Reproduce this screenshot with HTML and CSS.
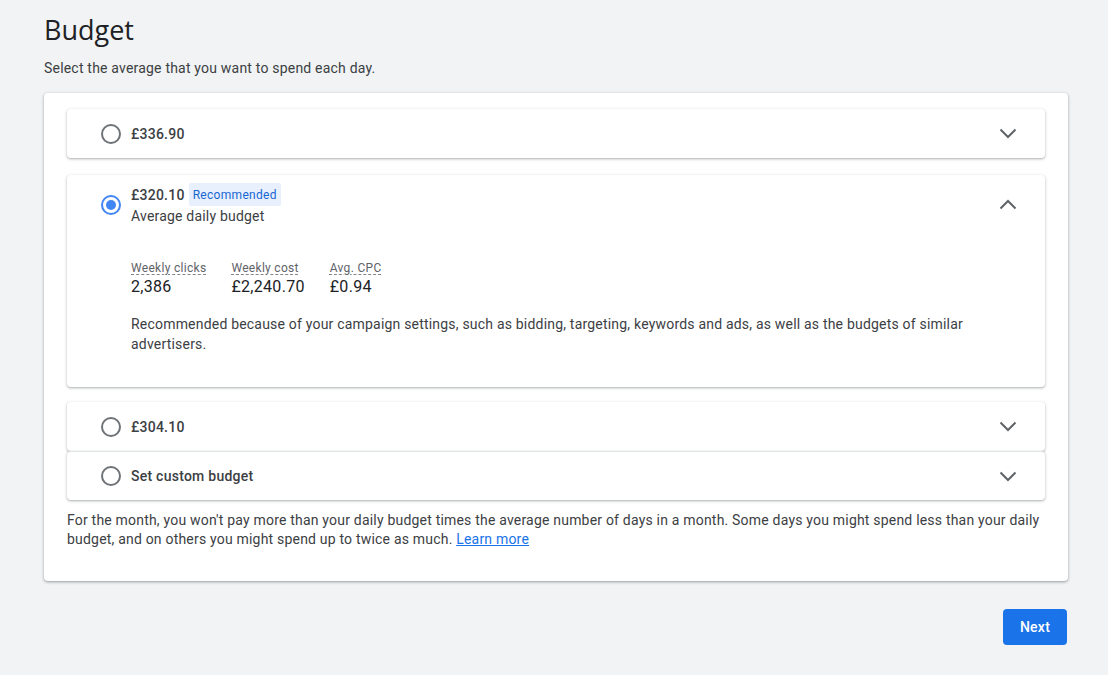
FILE: index.html
```html
<!DOCTYPE html>
<html>
<head>
<meta charset="utf-8">
<link rel="stylesheet" href="styles.css">
</head>
<body>
<main class="page">
  <h1 class="title">Budget</h1>
  <p class="subtitle">Select the average that you want to spend each day.</p>
  <section class="card">
    <div class="panel">
      <div class="row">
        <span class="radio"></span>
        <span class="price">£336.90</span>
        <svg class="chev" viewBox="0 0 18 11" width="18" height="11"><polyline points="1.5,1.5 9,9 16.5,1.5"/></svg>
      </div>
    </div>
    <div class="panel expanded">
      <div class="row top">
        <span class="radio checked"></span>
        <div class="head">
          <div class="priceline"><span class="price">£320.10</span><span class="badge">Recommended</span></div>
          <div class="sub">Average daily budget</div>
        </div>
        <svg class="chev" viewBox="0 0 18 11" width="18" height="11"><polyline points="1.5,9.5 9,2 16.5,9.5"/></svg>
      </div>
      <div class="details">
        <div class="stats">
          <div class="stat"><span class="label">Weekly clicks</span><span class="value">2,386</span></div>
          <div class="stat"><span class="label">Weekly cost</span><span class="value">£2,240.70</span></div>
          <div class="stat"><span class="label">Avg. CPC</span><span class="value">£0.94</span></div>
        </div>
        <p class="desc">Recommended because of your campaign settings, such as bidding, targeting, keywords and ads, as well as the budgets of similar advertisers.</p>
      </div>
    </div>
    <div class="panel">
      <div class="row">
        <span class="radio"></span>
        <span class="price">£304.10</span>
        <svg class="chev" viewBox="0 0 18 11" width="18" height="11"><polyline points="1.5,1.5 9,9 16.5,1.5"/></svg>
      </div>
    </div>
    <div class="panel joined">
      <div class="row">
        <span class="radio"></span>
        <span class="price">Set custom budget</span>
        <svg class="chev" viewBox="0 0 18 11" width="18" height="11"><polyline points="1.5,1.5 9,9 16.5,1.5"/></svg>
      </div>
    </div>
    <p class="note">For the month, you won't pay more than your daily budget times the average number of days in a month. Some days you might spend less than your daily budget, and on others you might spend up to twice as much. <a href="#" class="link">Learn more</a></p>
  </section>
  <div class="actions"><button class="next">Next</button></div>
</main>
</body>
</html>
```
FILE: styles.css
```css
* { box-sizing: border-box; }
html, body { margin: 0; padding: 0; }
body {
  background: #f1f3f4;
  font-family: Roboto, "Liberation Sans", Arial, sans-serif;
  color: #3c4043;
  font-size: 14px;
  letter-spacing: 0.2px;
}
.page {
  padding: 12px 40px 0 44px;
  width: 1108px;
}
.title {
  margin: 0;
  font-family: "Open Sans", Roboto, sans-serif;
  font-weight: 400;
  font-size: 27px;
  line-height: 36px;
  color: #202124;
  letter-spacing: 0;
}
.subtitle {
  margin: 12px 0 0;
  font-size: 14px;
  line-height: 16px;
  color: #3c4043;
}
.card {
  margin-top: 17px;
  width: 1024px;
  background: #fff;
  border-radius: 4px;
  box-shadow: 0 1px 2px rgba(60,64,67,.3), 0 1px 3px 1px rgba(60,64,67,.15);
  padding: 16px 23px 32px;
}
.panel {
  background: #fff;
  border-radius: 4px;
  box-shadow: 0 1px 2px rgba(60,64,67,.3), 0 1px 3px 1px rgba(60,64,67,.1);
}
.panel.expanded { margin: 17px 0 15px; }
.panel.joined { border-top: 1px solid #e0e3e6; }
.row {
  display: flex;
  align-items: center;
  height: 49px;
  padding: 0 28px 0 34px;
}
.panel.joined .row { height: 48px; }
.row.top {
  height: auto;
  padding-top: 8px;
}
.radio {
  width: 20px;
  height: 20px;
  border: 2px solid #6f7377;
  border-radius: 50%;
  flex: none;
  margin-right: 10px;
  position: relative;
}
.radio.checked { border-color: #4285f4; }
.radio.checked::after {
  content: "";
  position: absolute;
  left: 3px; top: 3px;
  width: 10px; height: 10px;
  border-radius: 50%;
  background: #4285f4;
}
.price {
  font-size: 14px;
  font-weight: 500;
  letter-spacing: 0.25px;
  color: #3c4043;
  flex: 1;
}
.head { flex: 1; }
.priceline { display: flex; align-items: center; }
.priceline .price { flex: none; }
.badge {
  margin-left: 4px;
  background: #e8f0fe;
  color: #1967d2;
  font-size: 12px;
  line-height: 16px;
  letter-spacing: 0.3px;
  padding: 4px 4px 3px;
  border-radius: 2px;
}
.sub { line-height: 20px; color: #3c4043; }
.chev { fill: none; stroke: #5f6368; stroke-width: 2; flex: none; }
.details { padding: 35px 24px 33px 64px; }
.stats { display: flex; }
.stat { display: flex; flex-direction: column; margin-right: 25px; }
.label {
  font-size: 12px;
  line-height: 14px;
  letter-spacing: 0.3px;
  color: #5f6368;
  text-decoration: underline dashed #80868b;
  text-underline-offset: 2px;
}
.value {
  font-size: 16px;
  line-height: 22px;
  letter-spacing: 0.3px;
  color: #202124;
  margin-top: 1px;
}
.desc {
  margin: 16px 0 0;
  line-height: 20px;
  color: #3c4043;
}
.note {
  margin: 11px 0 0;
  line-height: 19px;
  color: #3c4043;
}
.link { color: #1a73e8; }
.actions { display: flex; justify-content: flex-end; margin-top: 28px; padding-right: 1px; }
.next {
  background: #1a73e8;
  color: #fff;
  border: none;
  border-radius: 4px;
  font-family: Roboto, sans-serif;
  font-weight: 500;
  font-size: 14px;
  letter-spacing: 0.25px;
  width: 64px;
  height: 36px;
}
```
